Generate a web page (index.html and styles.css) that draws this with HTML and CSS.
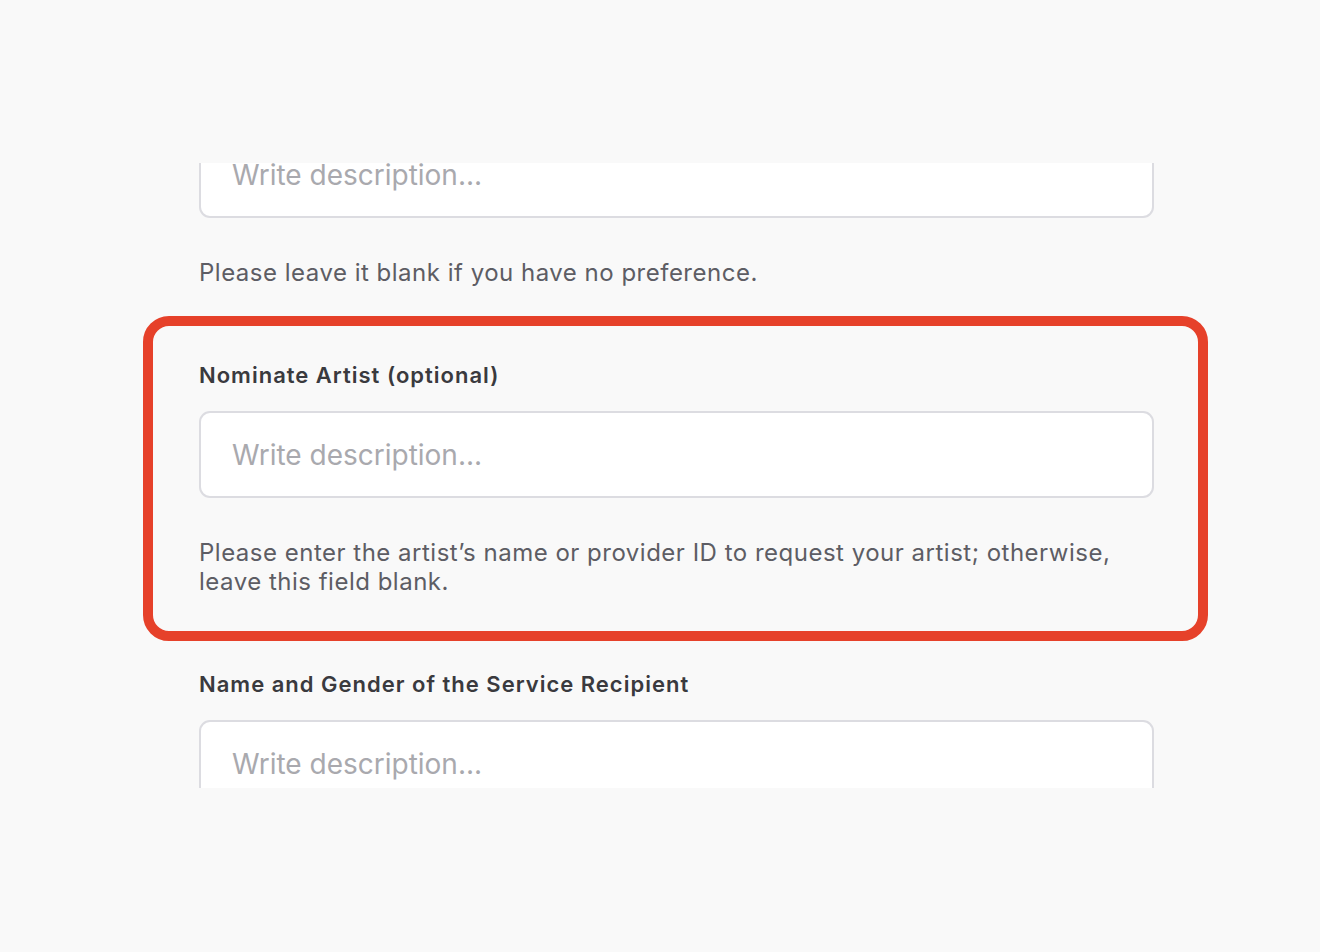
FILE: index.html
```html
<!DOCTYPE html>
<html>
<head>
  <title>Request Details</title>
  <link rel="stylesheet" href="styles.css">
</head>
<body>
  <div class="frame">
    <form class="form">
      <div class="field">
        <input type="text" class="text-input" placeholder="Write description...">
        <p class="hint">Please leave it blank if you have no preference.</p>
      </div>

      <div class="field highlight">
        <label class="label">Nominate Artist (optional)</label>
        <input type="text" class="text-input" placeholder="Write description...">
        <p class="hint">Please enter the artist’s name or provider ID to request your artist; otherwise, leave this field blank.</p>
      </div>

      <div class="field">
        <label class="label">Name and Gender of the Service Recipient</label>
        <input type="text" class="text-input" placeholder="Write description...">
      </div>
    </form>
  </div>
</body>
</html>
```

FILE: styles.css
```css
body {
  margin: 0;
  padding: 0;
  background-color: #f9f9f9;
  font-family: Inter, "Noto Sans", sans-serif;
}

/* visible slice of the form */
.frame {
  margin-top: 163px;
  height: 625px;
  overflow: hidden;
}

.form {
  width: 955px;
  margin: -32px 0 0 199px;
  display: flex;
  flex-direction: column;
  gap: 74px;
}

.field {
  display: flex;
  flex-direction: column;
  position: relative;
}

.label {
  font-size: 22px;
  line-height: 28px;
  font-weight: 600;
  letter-spacing: 1px;
  color: #3a3a3e;
  margin-bottom: 22px;
}

.text-input {
  box-sizing: border-box;
  height: 87px;
  padding: 0 31px;
  border: 2px solid #dcdce1;
  border-radius: 11px;
  background: #ffffff;
  font-family: inherit;
  font-size: 28px;
  color: #3a3a3e;
  outline: none;
}

.text-input::placeholder {
  color: #a9a9ae;
}

.hint {
  margin: 40px 0 0;
  font-size: 24px;
  line-height: 29px;
  letter-spacing: 0.5px;
  color: #5d5d64;
}

/* red callout ring around a field */
.highlight::after {
  content: "";
  position: absolute;
  top: -45px;
  bottom: -45px;
  left: -56px;
  right: -54px;
  border: 10px solid #e6412a;
  border-radius: 26px;
  pointer-events: none;
}
```
